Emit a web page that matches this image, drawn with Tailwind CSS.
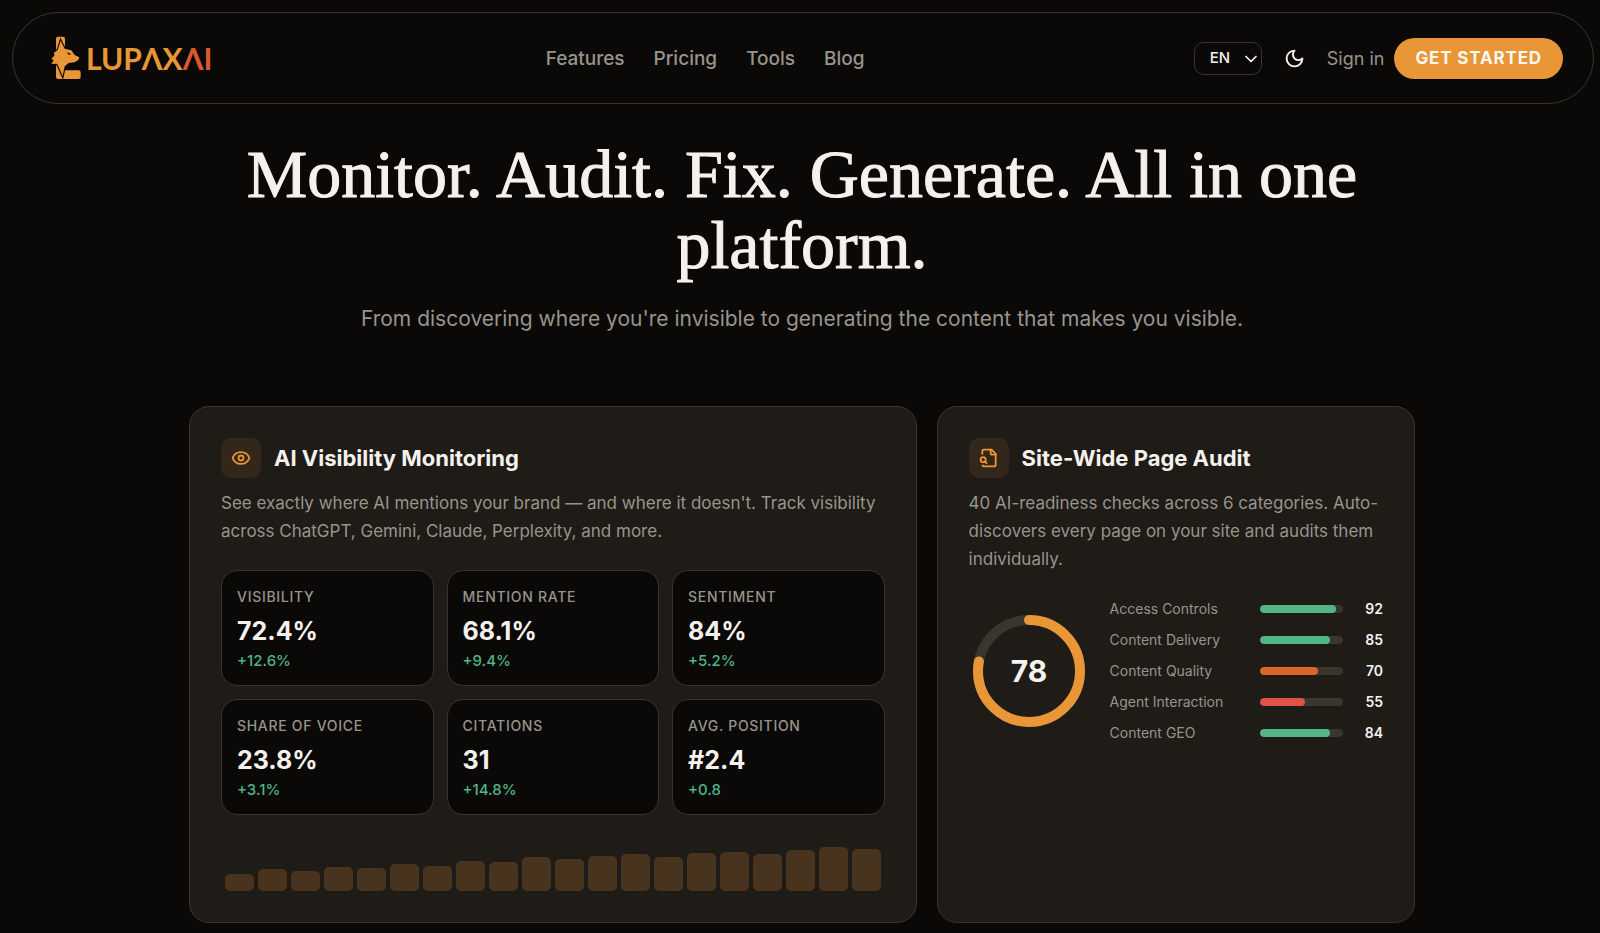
<!DOCTYPE html>
<html lang="en">
<head>
<meta charset="utf-8">
<meta name="viewport" content="width=device-width, initial-scale=1">
<title>LupaxAI</title>
<script src="https://cdn.jsdelivr.net/npm/@tailwindcss/browser@4"></script>
</head>
<body class="min-h-screen bg-[#0a0907] font-['Inter',sans-serif] text-[#f5f2ee]">
<header class="pt-3 pr-1.5 pl-3">
  <div class="flex h-[92px] items-center justify-between rounded-full border border-[#38352e] pr-[30px] pl-[38px]">
    <a href="#" class="flex items-center gap-[5px] pr-1" aria-label="LupaxAI">
      <svg class="h-[44px] w-[30px]" viewBox="151 109 90 132" fill="#e99636" aria-hidden="true">
        <path d="M166 117q0-6 6-6h15q6 0 6 6v95h41q6 0 6 6v14q0 6-6 6h-62q-6 0-6-6z"/>
        <path d="M180 123l12 24 20 5 10 14 14 7-3 8-11 7-18 2-12 10-6 29-12-27-5-10-17 1 7-11-7-5 9-9-1-9 11-8z" stroke="#0a0907" stroke-width="7" paint-order="stroke"/>
        <path d="M199 158l11 4-2 4-6-2z" fill="#0a0907"/>
      </svg>
      <span class="font-['Lato',sans-serif] text-[30px] leading-none font-bold text-[#e99636]">LUPΛX<span class="text-[#d9592f]">ΛI</span></span>
    </a>
    <nav class="mt-[3px] flex items-center gap-[29px] text-[19px] font-medium text-[#98948b]" aria-label="Main">
      <a href="#">Features</a><a href="#">Pricing</a><a href="#">Tools</a><a href="#">Blog</a>
    </nav>
    <div class="flex items-center">
      <div class="relative">
        <select aria-label="Language" class="h-[33px] w-[68px] appearance-none rounded-[10px] border border-[#38352e] bg-transparent pl-[15px] text-[15px] font-medium"><option>EN</option></select>
        <svg class="pointer-events-none absolute top-[13px] right-[5px] h-2 w-3" viewBox="0 0 12 8" fill="none" stroke="#f5f2ee" stroke-width="1.7" stroke-linecap="round" stroke-linejoin="round" aria-hidden="true"><path d="M1 1.5l5 5 5-5"/></svg>
      </div>
      <button type="button" aria-label="Toggle theme" class="ml-[22px]">
        <svg class="size-[21px]" viewBox="0 0 24 24" fill="none" stroke="#f5f2ee" stroke-width="2.2" stroke-linecap="round" stroke-linejoin="round"><path d="M12 3a6 6 0 0 0 9 9 9 9 0 1 1-9-9Z"/></svg>
      </button>
      <a href="#" class="ml-[22px] text-[18px] text-[#98948b]">Sign in</a>
      <button type="button" class="ml-2.5 h-[41px] rounded-full bg-[#e99636] px-[21px] pt-0.5 text-[17px] font-bold tracking-wider whitespace-nowrap text-[#fdf8f2]">GET STARTED</button>
    </div>
  </div>
</header>

<main class="pl-1">
  <div class="mx-auto max-w-[1226px]">
    <section class="pt-[35px] text-center">
      <h1 class="mx-auto max-w-[1160px] font-['Liberation_Serif',serif] text-[68px] leading-[71px] [-webkit-text-stroke:1px_#f5f2ee]">Monitor. Audit. Fix. Generate. All in one platform.</h1>
      <p class="mt-5 text-[21px] leading-[36px] text-[#98948b]">From discovering where you're invisible to generating the content that makes you visible.</p>
    </section>

    <div class="mt-[69px] grid grid-cols-5 gap-5">
      <section class="col-span-3 rounded-[20px] border border-[#38352e] bg-[#1f1b17] p-[31px]">
        <div class="flex items-center gap-[13px]">
          <span class="flex size-10 items-center justify-center rounded-[10px] bg-[#33261a]">
            <svg class="size-5" viewBox="0 0 24 24" fill="none" stroke="#e99636" stroke-width="2.2" stroke-linecap="round" stroke-linejoin="round" aria-hidden="true"><path d="M2.062 12.348a1 1 0 0 1 0-.696 10.75 10.75 0 0 1 19.876 0 1 1 0 0 1 0 .696 10.75 10.75 0 0 1-19.876 0"/><circle cx="12" cy="12" r="3"/></svg>
          </span>
          <h2 class="text-[22px] font-bold">AI Visibility Monitoring</h2>
        </div>
        <p class="mt-[11px] text-[17px] leading-[28px] text-[#98948b]">See exactly where AI mentions your brand — and where it doesn't. Track visibility across ChatGPT, Gemini, Claude, Perplexity, and more.</p>
        <dl id="stats" class="mt-[25px] grid grid-cols-3 gap-[13px]"></dl>
        <div id="chart" class="mt-7 flex h-12 items-end gap-1 px-1" role="img" aria-label="Visibility trend"></div>
      </section>

      <section class="col-span-2 rounded-[20px] border border-[#38352e] bg-[#1f1b17] p-[31px]">
        <div class="flex items-center gap-[13px]">
          <span class="flex size-10 items-center justify-center rounded-[10px] bg-[#33261a]">
            <svg class="size-5" viewBox="0 0 24 24" fill="none" stroke="#e99636" stroke-width="2.2" stroke-linecap="round" stroke-linejoin="round" aria-hidden="true"><path d="M14 2v4a2 2 0 0 0 2 2h4"/><path d="M4.268 21a2 2 0 0 0 1.727 1H18a2 2 0 0 0 2-2V7l-5-5H6a2 2 0 0 0-2 2v3"/><path d="m9 18-1.500-1.500"/><circle cx="5" cy="14" r="3"/></svg>
          </span>
          <h2 class="text-[22px] font-bold">Site-Wide Page Audit</h2>
        </div>
        <p class="mt-[11px] text-[17px] leading-[28px] text-[#98948b]">40 AI-readiness checks across 6 categories. Auto-discovers every page on your site and audits them individually.</p>
        <div class="mt-[25px] flex items-center gap-[21px]">
          <svg class="size-[120px] shrink-0" viewBox="0 0 120 120" fill="none" stroke-width="10" role="img" aria-label="Score 78">
            <circle cx="60" cy="60" r="51" stroke="#3a362e"/>
            <circle cx="60" cy="60" r="51" stroke="#e99636" stroke-linecap="round" pathLength="100" stroke-dasharray="78 100" transform="rotate(-90 60 60)"/>
            <text x="60" y="71" text-anchor="middle" class="fill-[#f5f2ee] stroke-none text-[30px] font-bold">78</text>
          </svg>
          <ul id="audit" class="flex flex-1 flex-col gap-2.5"></ul>
        </div>
      </section>
    </div>
  </div>
</main>

<script>
const stats = [["VISIBILITY","72.4%","+12.6%"],["MENTION RATE","68.1%","+9.4%"],["SENTIMENT","84%","+5.2%"],["SHARE OF VOICE","23.8%","+3.1%"],["CITATIONS","31","+14.8%"],["AVG. POSITION","#2.4","+0.8"]];
document.getElementById("stats").innerHTML = stats.map(([l, v, d]) => `
  <div class="rounded-2xl border border-[#38352e] bg-[#0a0907] px-[15px] pt-[15px] pb-3">
    <dt class="text-[14px] leading-[22px] font-medium tracking-wider text-[#98948b]">${l}</dt>
    <dd class="mt-[5px] text-[25px] leading-[36px] font-bold">${v}</dd>
    <dd class="text-[15px] leading-[24px] font-medium text-[#4fb583]">${d}</dd>
  </div>`).join("");

const heights = [17,22,20,24,23,27,25,30,29,34,32,35,37,34,38,39,37,41,44,42];
document.getElementById("chart").innerHTML = heights.map(h => `<div class="flex-1 rounded-[5px] bg-[#48331f]" style="height:${h}px"></div>`).join("");

const audit = [["Access Controls",92,"bg-[#55b685]"],["Content Delivery",85,"bg-[#55b685]"],["Content Quality",70,"bg-[#dd642a]"],["Agent Interaction",55,"bg-[#df5349]"],["Content GEO",84,"bg-[#55b685]"]];
document.getElementById("audit").innerHTML = audit.map(([l, n, c]) => `
  <li class="flex items-center gap-3 text-[14px] leading-[21px]">
    <span class="w-[138px] text-[#98948b]">${l}</span>
    <span class="h-2 flex-1 overflow-hidden rounded-full bg-[#3a362e]"><span class="block h-full rounded-full ${c}" style="width:${n}%"></span></span>
    <span class="w-7 text-right font-semibold">${n}</span>
  </li>`).join("");
</script>
</body>
</html>
